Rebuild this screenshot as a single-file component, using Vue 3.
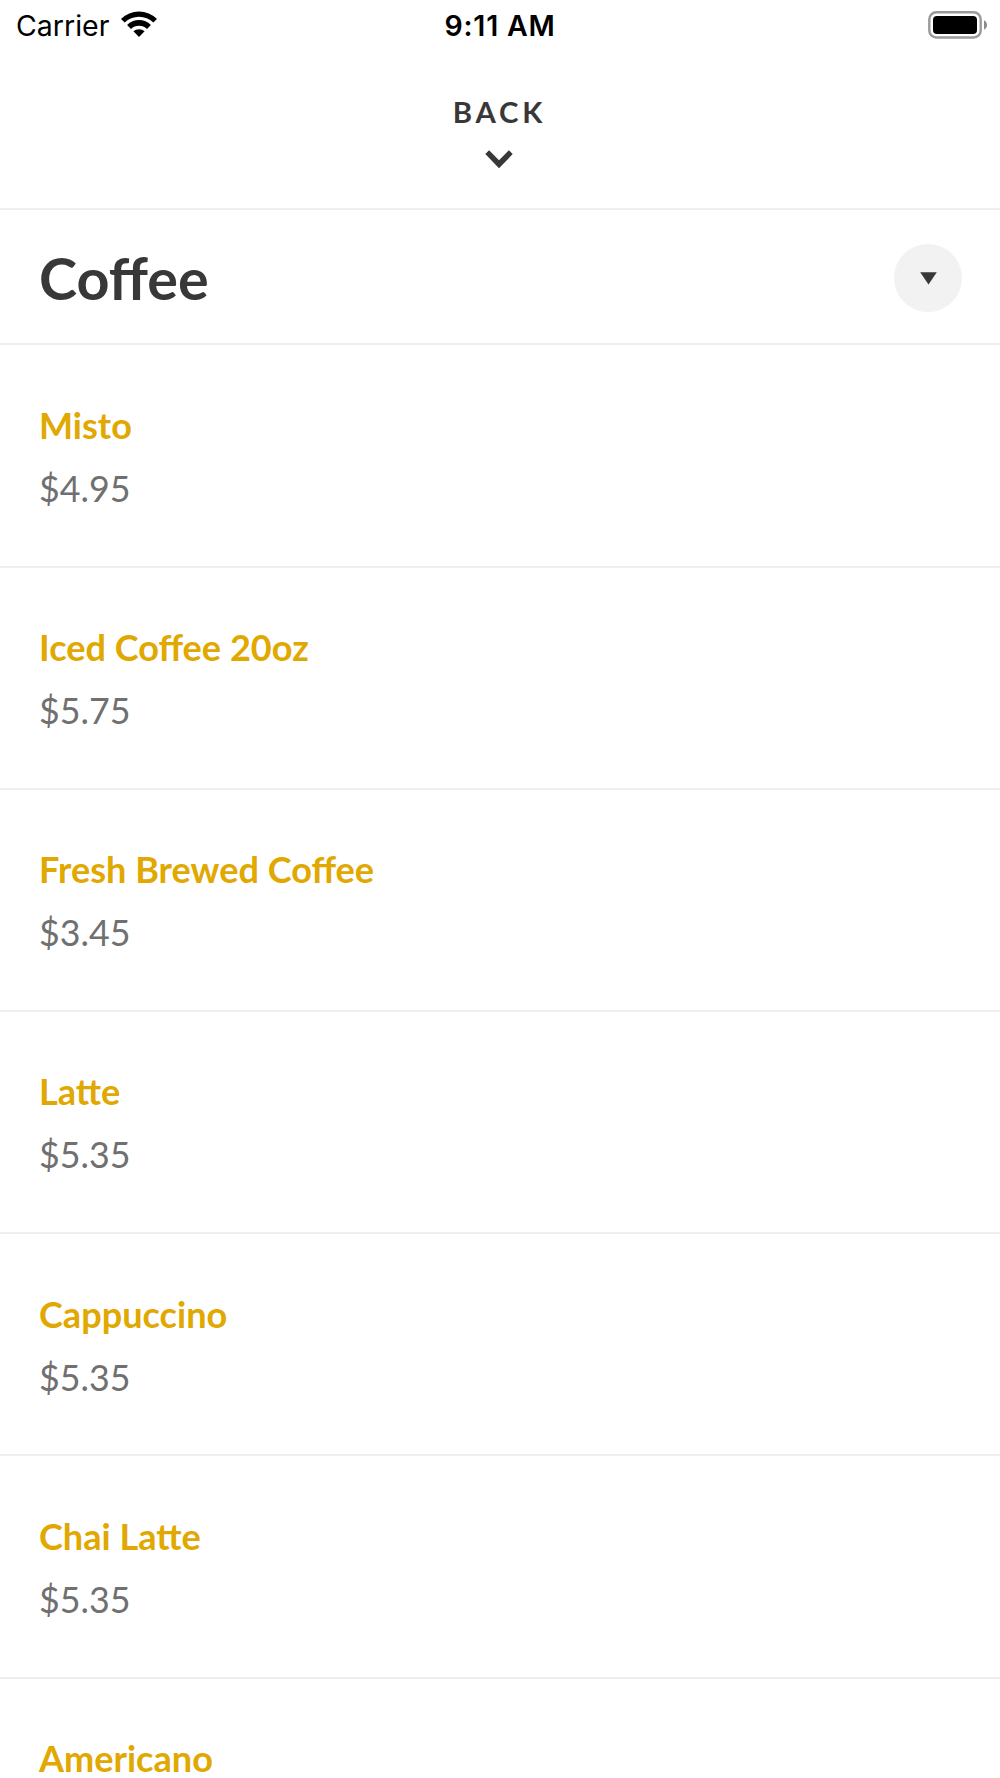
<template>
  <div class="menu-screen">
    <!-- status bar -->
    <div class="status-bar">
      <div class="status-left">
        <span class="carrier">Carrier</span>
        <svg class="wifi" width="38" height="28" viewBox="0 0 38 28">
          <path d="M1 8.9 A25.6 25.6 0 0 1 37 8.9 L33.3 12.6 A20.3 20.3 0 0 0 4.7 12.6 Z" />
          <path d="M7.1 15 A16.9 16.9 0 0 1 30.9 15 L27 18.9 A11.5 11.5 0 0 0 11 18.9 Z" />
          <path d="M13.4 21.3 A8.3 8.3 0 0 1 24.6 21.3 L19 27 Z" />
        </svg>
      </div>
      <span class="clock">9:11 AM</span>
      <div class="status-right">
        <svg class="battery" width="60" height="28" viewBox="0 0 60 28">
          <rect x="1.3" y="1.3" width="51.4" height="25.2" rx="7" fill="#fff" stroke="#9a9a9a" stroke-width="2.4" />
          <rect x="5" y="5" width="44" height="18" rx="4" />
          <path d="M56 9.3 Q59 10.8 59 14 Q59 17.2 56 18.7 Z" fill="#8c8c8c" />
        </svg>
      </div>
    </div>

    <!-- back -->
    <button class="back">
      <span class="back-label">BACK</span>
      <svg class="back-icon" width="28" height="19" viewBox="0 0 28 19">
        <path d="M4.1 0.3 L14 10.2 L23.9 0.3 L27.7 4.1 L14 18.3 L0.3 4.1 Z" />
      </svg>
    </button>

    <!-- category -->
    <div class="category" @click="expanded = !expanded">
      <h1 class="category-title">Coffee</h1>
      <span :class="['toggle', { closed: !expanded }]">
        <svg width="17" height="13" viewBox="0 0 17 13">
          <path d="M0.2 0.2 H16.8 L8.5 12.4 Z" />
        </svg>
      </span>
    </div>

    <!-- items -->
    <ul v-if="expanded" class="items">
      <li v-for="item in items" :key="item.name" class="item">
        <div class="item-name">{{ item.name }}</div>
        <div v-if="item.price" class="item-price">{{ item.price }}</div>
      </li>
    </ul>
  </div>
</template>

<script setup>
import { ref } from 'vue'

const expanded = ref(true)

const items = ref([
  { name: 'Misto', price: '$4.95' },
  { name: 'Iced Coffee 20oz', price: '$5.75' },
  { name: 'Fresh Brewed Coffee', price: '$3.45' },
  { name: 'Latte', price: '$5.35' },
  { name: 'Cappuccino', price: '$5.35' },
  { name: 'Chai Latte', price: '$5.35' },
  { name: 'Americano' }
])
</script>

<style>
body {
  margin: 0;
  background: #fff;
}
</style>

<style scoped>
.menu-screen {
  height: 1778px;
  overflow: hidden;
  background: #fff;
  color: #383838;
  font-family: Lato, sans-serif;
}

.status-bar {
  display: grid;
  grid-template-columns: 1fr auto 1fr;
  align-items: center;
  height: 50px;
  padding: 0 12px 0 16px;
  color: #000;
  font-family: Inter, sans-serif;
  font-size: 28.5px;
}

.status-left {
  display: flex;
  align-items: center;
  gap: 10.5px;
}

.status-right {
  display: flex;
  justify-content: flex-end;
}

.wifi {
  margin-bottom: 2px;
}

.battery {
  margin-bottom: 1px;
}

.clock {
  margin: 0 2px 0 -2px;
  font-weight: 600;
  letter-spacing: 0.8px;
}

.back {
  display: flex;
  flex-direction: column;
  align-items: center;
  box-sizing: border-box;
  width: 100%;
  height: 160px;
  padding: 44px 3px 0 0;
  border: none;
  border-bottom: 2px solid #eee;
  background: none;
  color: inherit;
  font-family: inherit;
  cursor: pointer;
}

.back-label {
  padding-left: 2px;
  font-size: 29.33px;
  font-weight: 700;
  line-height: 35px;
  letter-spacing: 3.8px;
}

.back-icon {
  margin-top: 21px;
  fill: #383838;
}

.category {
  display: flex;
  align-items: center;
  justify-content: space-between;
  box-sizing: border-box;
  height: 135.4px;
  padding: 2px 38.5px 0 39px;
  border-bottom: 2px solid #eee;
}

.category-title {
  margin: 1px 0 0;
  font-size: 57.5px;
  font-weight: 700;
  line-height: 70px;
}

.toggle {
  display: flex;
  align-items: center;
  justify-content: center;
  box-sizing: border-box;
  width: 68px;
  height: 68px;
  padding: 1px 0 0 2px;
  border-radius: 50%;
  background: #f2f2f2;
  fill: #383838;
}

.toggle.closed svg {
  transform: rotate(-90deg);
}

.items {
  margin: 0;
  padding: 0;
  list-style: none;
}

.item {
  box-sizing: border-box;
  height: 222.22px;
  padding: 57.3px 39px 0;
  border-bottom: 2px solid #eee;
  font-size: 36.1px;
  line-height: 45px;
}

.item-name {
  color: #e0a800;
  font-weight: 700;
}

.item-price {
  margin-top: 18px;
  color: #707070;
  font-size: 35.8px;
}
</style>
